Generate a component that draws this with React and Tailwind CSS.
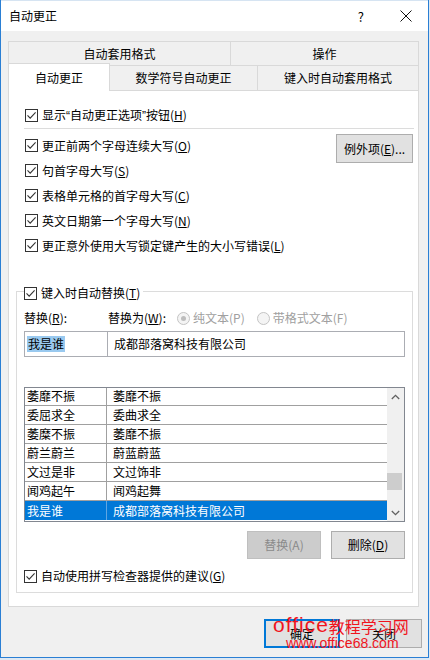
import React from 'react';

const rows = [
  ['萎靡不振', '萎靡不振'],
  ['委屈求全', '委曲求全'],
  ['萎糜不振', '萎靡不振'],
  ['蔚兰蔚兰', '蔚蓝蔚蓝'],
  ['文过是非', '文过饰非'],
  ['闻鸡起午', '闻鸡起舞'],
  ['我是谁', '成都部落窝科技有限公司'],
];

const Box = () => (
  <span className="w-[13px] h-[13px] border border-[#333] bg-white flex items-center justify-center shrink-0">
    <svg width="11" height="11" viewBox="0 0 11 11">
      <path d="M1.5 5.3 L4.2 8.2 L9.6 2.4" fill="none" stroke="#333" strokeWidth="1.1" />
    </svg>
  </span>
);

const Check = ({ children, className = '' }) => (
  <div className={`flex items-center gap-[4px] h-[20px] ${className}`}>
    <Box />
    <span className="leading-none whitespace-nowrap">{children}</span>
  </div>
);

const Radio = ({ on, children }) => (
  <div className="flex items-center gap-[3px] text-[#a0a0a0]">
    <span className="w-[13px] h-[13px] rounded-full border border-[#c4c4c4] bg-[#f4f4f4] flex items-center justify-center">
      {on && <span className="w-[5px] h-[5px] rounded-full bg-[#bdbdbd]" />}
    </span>
    <span className="leading-none whitespace-nowrap">{children}</span>
  </div>
);

const Q = ({ children }) => (
  <span className="font-['Liberation_Sans',sans-serif]">{children}</span>
);

const App = () => {
  return (
    <div className="relative w-[430px] h-[660px] bg-[#dfe8f2] text-[12px] text-black font-['Microsoft_YaHei','Noto_Sans_CJK_SC',sans-serif]">
      <div className="w-[429px] h-[658px] border border-t-0 border-[#2a7fd4] bg-[#f0f0f0] flex flex-col">
        {/* title bar */}
        <div className="h-[31px] bg-white flex items-center pl-[8px] pr-[16px] border-t border-[#d6e4f2]">
          <span className="leading-none">自动更正</span>
          <span className="ml-auto text-[13px] leading-none">?</span>
          <svg className="ml-[36px]" width="12" height="12" viewBox="0 0 12 12">
            <path d="M0.5 0.5 L11.5 11.5 M11.5 0.5 L0.5 11.5" stroke="#111" strokeWidth="1" />
          </svg>
        </div>

        <div className="pl-[7px] pr-[9px] pt-[10px]">
          {/* tabs */}
          <div className="flex h-[24px]">
            <div className="w-[223px] border border-b-0 border-[#d9d9d9] flex items-center justify-center leading-none">自动套用格式</div>
            <div className="flex-1 -ml-px border border-b-0 border-[#d9d9d9] flex items-center justify-center leading-none">操作</div>
          </div>
          <div className="flex h-[25px] items-end">
            <div className="relative z-10 w-[102px] h-[28px] -mb-px bg-white border border-b-0 border-[#d9d9d9] flex items-center justify-center leading-none">自动更正</div>
            <div className="w-[148px] h-[25px] border-t border-r border-[#d9d9d9] flex items-center justify-center leading-none">数学符号自动更正</div>
            <div className="flex-1 h-[25px] border-t border-r border-[#d9d9d9] flex items-center justify-center leading-none">键入时自动套用格式</div>
          </div>

          {/* panel */}
          <div className="h-[517px] bg-white border border-[#d9d9d9] pl-[16px] pr-[5px] pt-[14px]">
            <Check>显示<Q>“</Q>自动更正选项<Q>”</Q>按钮(<u>H</u>)</Check>
            <div className="mt-[3px] h-px bg-[#dcdcdc] -ml-px -mr-px" />
            <div className="mt-[4px] flex justify-between">
              <div className="flex flex-col">
                <Check className="h-[25px]">更正前两个字母连续大写(<u>O</u>)</Check>
                <Check className="h-[25px]">句首字母大写(<u>S</u>)</Check>
                <Check className="h-[25px]">表格单元格的首字母大写(<u>C</u>)</Check>
                <Check className="h-[25px]">英文日期第一个字母大写(<u>N</u>)</Check>
                <Check className="h-[25px]">更正意外使用大写锁定键产生的大小写错误(<u>L</u>)</Check>
              </div>
              <button className="mt-[1px] w-[77px] h-[29px] bg-[#e1e1e1] border border-[#adadad] leading-none">例外项(<u>E</u>)...</button>
            </div>

            {/* group */}
            <div className="mt-[33px] -ml-[9px] h-[302px] border border-[#dcdcdc] px-[7px]">
              <div className="-mt-[9px] w-fit bg-white pr-[3px]">
                <Check>键入时自动替换(<u>T</u>)</Check>
              </div>
              <div className="mt-[5px] h-[20px] flex items-center">
                <span className="w-[84px] leading-none">替换(<u>R</u>):</span>
                <span className="w-[69px] leading-none whitespace-nowrap">替换为(<u>W</u>):</span>
                <div className="flex items-center gap-[12px]">
                  <Radio on>纯文本(P)</Radio>
                  <Radio>带格式文本(F)</Radio>
                </div>
              </div>
              <div className="mt-[3px] h-[26px] flex">
                <div className="w-[84px] border border-[#abadb3] flex items-center pl-[2px]">
                  <span className="bg-[#99c9ef] leading-[16px] px-px">我是谁</span>
                </div>
                <div className="flex-1 -ml-px border border-[#abadb3] flex items-center pl-[6px] leading-none">成都部落窝科技有限公司</div>
              </div>

              {/* list */}
              <div className="mt-[30px] h-[135px] border border-[#828790] flex overflow-hidden">
                <div className="flex-1 -mt-px">
                  {rows.map(([a, b], i) => {
                    const sel = i === rows.length - 1;
                    return (
                      <div
                        key={i}
                        className={`h-[19px] flex ${sel ? 'bg-[#0078d7] text-white' : 'border-b border-[#a0a0a0]'}`}
                      >
                        <div className={`w-[82px] border-r ${sel ? 'border-[#5fa6e3]' : 'border-[#a0a0a0]'} flex items-center pl-[2px] leading-none`}>{a}</div>
                        <div className="flex-1 flex items-center pl-[6px] leading-none">{b}</div>
                      </div>
                    );
                  })}
                </div>
                <div className="w-[17px] bg-[#f0f0f0] flex flex-col items-center">
                  <div className="h-[17px] flex items-center justify-center">
                    <svg width="9" height="6" viewBox="0 0 9 6">
                      <path d="M0.8 5 L4.5 1.3 L8.2 5" fill="none" stroke="#606060" strokeWidth="1.3" />
                    </svg>
                  </div>
                  <div className="flex-1 w-full">
                    <div className="mt-[68px] mr-[2px] h-[17px] bg-[#cdcdcd]" />
                  </div>
                  <div className="h-[17px] flex items-center justify-center">
                    <svg width="9" height="6" viewBox="0 0 9 6">
                      <path d="M0.8 1 L4.5 4.7 L8.2 1" fill="none" stroke="#606060" strokeWidth="1.3" />
                    </svg>
                  </div>
                </div>
              </div>

              <div className="mt-[9px] flex justify-end gap-[10px]">
                <button className="w-[74px] h-[28px] bg-[#cccccc] border border-[#bfbfbf] text-[#8a8a8a] leading-none">替换(A)</button>
                <button className="w-[74px] h-[28px] bg-[#e1e1e1] border border-[#adadad] leading-none">删除(<u>D</u>)</button>
              </div>
              <Check className="mt-[7px]">自动使用拼写检查器提供的建议(<u>G</u>)</Check>
            </div>
          </div>

          {/* footer */}
          <div className="mt-[12px] -mr-[3px] flex justify-end gap-[6px]">
            <button className="w-[76px] h-[29px] bg-[#e1e1e1] border-2 border-[#0078d7] leading-none">确定</button>
            <button className="w-[76px] h-[29px] bg-[#e1e1e1] border border-[#adadad] leading-none">关闭</button>
          </div>
        </div>
      </div>

      {/* watermark */}
      <div className="absolute top-[613px] left-[273px] flex flex-col text-[#f0141e] pointer-events-none">
        <div className="flex items-end h-[22px] leading-none">
          <span className="font-['Liberation_Sans',sans-serif] text-[21px] tracking-[1px]">office</span>
          <span className="font-['Noto_Sans_CJK_SC',sans-serif] text-[16px] mb-[1px]">教程学习网</span>
        </div>
        <div className="ml-[13px] h-[16px] flex items-center font-['Liberation_Sans',sans-serif] text-[14px] leading-none">www.office68.com</div>
      </div>
    </div>
  );
};

export default App;
